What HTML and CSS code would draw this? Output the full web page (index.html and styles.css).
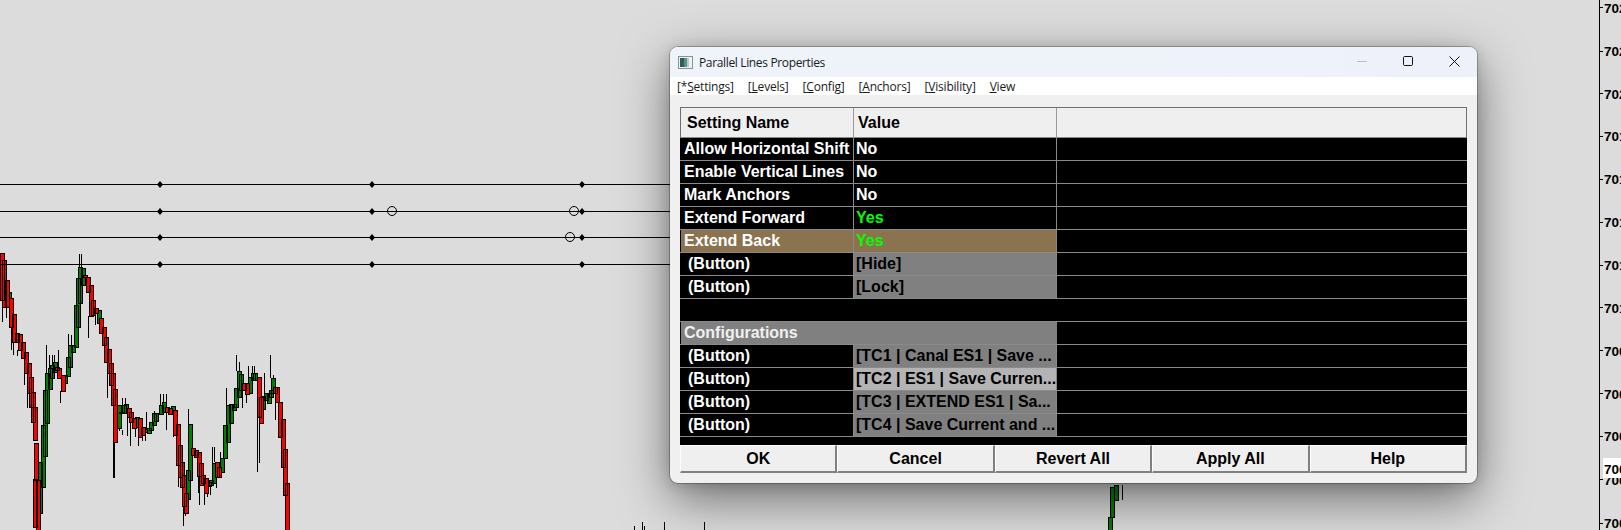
FILE: index.html
```html
<!DOCTYPE html>
<html lang="en">
<head>
<meta charset="utf-8">
<title>Parallel Lines Properties</title>
<link rel="stylesheet" href="styles.css">
</head>
<body>
<svg class="chart" width="1621" height="530" viewBox="0 0 1621 530" shape-rendering="crispEdges">
  <path class="wick" d="M2.5 307v15M6.5 307v11M11.5 327v23M13.5 342v13M17.5 350v6M24.5 373v12M27.5 393v15M46.5 345v28M49.5 355v13M52.5 355v11M54.5 355v7M58.5 350v18M60.5 391v12M68.5 334v11M71.5 335v10M79.5 254v14M81.5 254v14M88.5 316v22M92.5 297v3M95.5 310v15M107.5 373v25M113.5 442v36M114.5 442v36M117.5 398v7M119.5 428v3M122.5 398v7M122.5 430v5M125.5 398v7M127.5 417v19M130.5 422v24M135.5 427v10M138.5 437v9M142.5 435v6M145.5 434v7M146.5 412v20M154.5 411v9M158.5 414v6M160.5 394v16M163.5 394v16M166.5 394v14M166.5 412v18M173.5 435v2M178.5 476v11M183.5 506v20M185.5 512v4M188.5 409v15M191.5 424v44M198.5 476v17M199.5 485v20M204.5 493v12M207.5 486v11M210.5 485v10M212.5 447v16M214.5 447v15M216.5 477v11M220.5 452v6M226.5 388v17M232.5 410v10M236.5 355v16M239.5 362v12M242.5 390v18M246.5 394v9M248.5 366v11M252.5 366v7M254.5 366v7M257.5 417v55M259.5 423v40M264.5 373v20M264.5 400v6M270.5 355v23M273.5 375v12M275.5 402v18M1122.5 485v15M634.5 526v4M642.5 522v8M644.5 526v4M664.5 522v8M704.5 522v8"/>
  <path class="candle-green" d="M7.500 292h4v13h-4zM38.500 462h4v51h-4zM41.500 425h4v62h-4zM43.500 390h4v66h-4zM45.500 373h4v50h-4zM48.500 368h4v21h-4zM50.500 365h4v13h-4zM53.500 362h4v10h-4zM63.500 375h4v8h-4zM66.500 357h4v19h-4zM68.500 345h4v22h-4zM71.500 345h4v7h-4zM74.500 305h4v42h-4zM76.500 278h4v49h-4zM78.500 267h4v36h-4zM81.500 268h4v17h-4zM97.500 310h4v13h-4zM117.500 405h4v23h-4zM122.500 405h4v8h-4zM124.500 404h4v9h-4zM135.500 417h4v10h-4zM143.500 429h4v3h-4zM147.500 428h4v5h-4zM149.500 422h4v8h-4zM152.500 413h4v12h-4zM154.500 413h4v8h-4zM159.500 405h4v9h-4zM162.500 402h4v10h-4zM171.500 406h4v4h-4zM186.500 470h4v29h-4zM188.500 424h4v56h-4zM207.500 482h4v4h-4zM209.500 480h4v5h-4zM212.500 463h4v20h-4zM220.500 458h4v14h-4zM223.500 425h4v33h-4zM226.500 405h4v37h-4zM229.500 404h4v19h-4zM232.500 404h4v6h-4zM234.500 388h4v19h-4zM237.500 371h4v26h-4zM239.500 374h4v16h-4zM248.500 377h4v16h-4zM251.500 373h4v7h-4zM253.500 373h4v7h-4zM261.500 396h4v13h-4zM264.500 393h4v7h-4zM267.500 393h4v10h-4zM269.500 390h4v7h-4zM271.500 378h4v15h-4zM1108.500 517h4v13h-4zM1110.500 487h4v30h-4zM1114.500 485h4v15h-4z"/>
  <path class="candle-red" d="M.5 253h4v47h-4zM2.500 260h4v47h-4zM5.500 280h4v27h-4zM9.500 298h4v29h-4zM12.500 314h4v28h-4zM15.500 333h4v9h-4zM18.500 334h4v16h-4zM21.500 342h4v16h-4zM24.500 352h4v21h-4zM27.500 363h4v30h-4zM29.500 377h4v30h-4zM31.500 392h4v30h-4zM33.500 407h4v33h-4zM34.500 443h4v37h-4zM33.500 479h4v48h-4zM36.500 480h4v50h-4zM55.500 367h4v3h-4zM57.500 368h4v10h-4zM61.500 375h4v16h-4zM83.500 275h4v2h-4zM86.500 277h4v15h-4zM89.500 285h4v31h-4zM91.500 300h4v15h-4zM94.500 308h4v5h-4zM99.500 318h4v15h-4zM102.500 327h4v18h-4zM104.500 337h4v25h-4zM107.500 349h4v24h-4zM109.500 363h4v22h-4zM111.500 373h4v32h-4zM113.500 389h4v53h-4zM119.500 412h4v1h-4zM127.500 408h4v9h-4zM129.500 412h4v10h-4zM132.500 418h4v10h-4zM138.500 418h4v19h-4zM141.500 427h4v8h-4zM165.500 407h4v5h-4zM168.500 408h4v6h-4zM173.500 410h4v25h-4zM176.500 424h4v41h-4zM178.500 445h4v32h-4zM180.500 462h4v25h-4zM182.500 475h4v31h-4zM184.500 493h4v20h-4zM191.500 448h4v7h-4zM194.500 450h4v7h-4zM197.500 452h4v24h-4zM199.500 463h4v22h-4zM201.500 475h4v8h-4zM204.500 478h4v15h-4zM215.500 462h4v15h-4zM217.500 467h4v10h-4zM242.500 383h4v7h-4zM245.500 383h4v11h-4zM257.500 377h4v40h-4zM259.500 397h4v26h-4zM273.500 387h4v6h-4zM275.500 387h4v15h-4zM278.500 402h4v35h-4zM281.500 419h4v48h-4zM283.500 449h4v46h-4zM285.500 483h4v47h-4z"/>
  <path class="hline" d="M0 184.500H670M0 211.500H670M0 237.500H670M0 264.500H670"/>
  <g class="anchor" shape-rendering="auto">
    <path d="M160 181l3 3.500-3 3.500-3-3.500zM372 181l3 3.500-3 3.500-3-3.500zM582 181l3 3.500-3 3.500-3-3.500zM160 208l3 3.500-3 3.500-3-3.500zM372 208l3 3.500-3 3.500-3-3.500zM582 208l3 3.500-3 3.500-3-3.500zM160 234l3 3.500-3 3.500-3-3.500zM372 234l3 3.500-3 3.500-3-3.500zM582 234l3 3.500-3 3.500-3-3.500zM160 261l3 3.500-3 3.500-3-3.500zM372 261l3 3.500-3 3.500-3-3.500zM582 261l3 3.500-3 3.500-3-3.500z"/>
  </g>
  <g class="ring" shape-rendering="auto">
    <circle cx="392" cy="211" r="4.500"/>
    <circle cx="574" cy="211" r="4.500"/>
    <circle cx="570" cy="237" r="4.500"/>
  </g>
  <path class="axis-line" d="M1599.500 0V530M1599 7h4M1599 51h4M1599 93h4M1599 136h4M1599 179h4M1599 222h4M1599 265h4M1599 307h4M1599 350h4M1599 393h4M1599 436h4M1599 479h4M1599 523h4"/>
  <g class="axis-labels">
    <text x="1604" y="13">7025.00</text>
    <text x="1604" y="56">7023.50</text>
    <text x="1604" y="99">7022.00</text>
    <text x="1604" y="141">7019.50</text>
    <text x="1604" y="184">7018.00</text>
    <text x="1604" y="227">7016.50</text>
    <text x="1604" y="270">7015.00</text>
    <text x="1604" y="313">7013.50</text>
    <text x="1604" y="356">7009.00</text>
    <text x="1604" y="399">7007.50</text>
    <text x="1604" y="441">7006.00</text>
    <text x="1604" y="485">7004.50</text>
    <text x="1604" y="528">7003.00</text>
    <rect class="price-flag" x="1603" y="458" width="18" height="20"/>
    <text x="1604" y="474">7005.25</text>
  </g>
</svg>

<section class="window">
  <header class="titlebar">
    <svg class="app-icon" width="15" height="13" viewBox="0 0 15 13">
      <rect x=".5" y=".5" width="14" height="12" fill="#eef0f2" stroke="#8d9196"/>
      <rect x="2" y="2" width="4" height="9" fill="#2c5f5c"/>
      <rect x="6" y="2" width="3" height="9" fill="#5f8f8c"/>
      <rect x="9" y="2" width="2" height="9" fill="#b5cdca"/>
      <rect x="11" y="2" width="2" height="9" fill="#eef2f4"/>
    </svg>
    <span class="window-title">Parallel Lines Properties</span>
    <div class="controls">
      <svg class="control" width="46" height="30" viewBox="0 0 46 30"><path class="min-glyph" d="M18 14.500h10"/></svg>
      <svg class="control" width="46" height="30" viewBox="0 0 46 30"><rect class="glyph" x="18.500" y="9.500" width="9" height="9" rx="1.200"/></svg>
      <svg class="control" width="46" height="30" viewBox="0 0 46 30"><path class="glyph" d="M18.500 9.500l10 10M28.500 9.500l-10 10"/></svg>
    </div>
  </header>
  <nav class="menubar">
    <span class="menu-item">[*<u>S</u>ettings]</span>
    <span class="menu-item">[<u>L</u>evels]</span>
    <span class="menu-item">[<u>C</u>onfig]</span>
    <span class="menu-item">[<u>A</u>nchors]</span>
    <span class="menu-item">[<u>V</u>isibility]</span>
    <span class="menu-item"><u>V</u>iew</span>
  </nav>
  <div class="content">
    <div class="grid">
      <div class="grid-head">
        <div class="head-cell">Setting Name</div>
        <div class="head-cell head-value">Value</div>
        <div class="head-cell"></div>
      </div>
      <div class="row"><div class="cell">Allow Horizontal Shift</div><div class="cell val">No</div><div class="cell"></div></div>
      <div class="row"><div class="cell">Enable Vertical Lines</div><div class="cell val">No</div><div class="cell"></div></div>
      <div class="row"><div class="cell">Mark Anchors</div><div class="cell val">No</div><div class="cell"></div></div>
      <div class="row"><div class="cell">Extend Forward</div><div class="cell val yes">Yes</div><div class="cell"></div></div>
      <div class="row"><div class="cell tan">Extend Back</div><div class="cell val yes tan">Yes</div><div class="cell"></div></div>
      <div class="row"><div class="cell btn-name">(Button)</div><div class="cell val action">[Hide]</div><div class="cell"></div></div>
      <div class="row"><div class="cell btn-name">(Button)</div><div class="cell val action">[Lock]</div><div class="cell"></div></div>
      <div class="row row-blank"></div>
      <div class="row"><div class="cell section-head">Configurations</div><div class="cell"></div></div>
      <div class="row"><div class="cell btn-name">(Button)</div><div class="cell val action">[TC1 | Canal ES1 | Save ...</div><div class="cell"></div></div>
      <div class="row"><div class="cell btn-name">(Button)</div><div class="cell val action action-hover">[TC2 | ES1 | Save Curren...</div><div class="cell"></div></div>
      <div class="row"><div class="cell btn-name">(Button)</div><div class="cell val action">[TC3 | EXTEND ES1 | Sa...</div><div class="cell"></div></div>
      <div class="row"><div class="cell btn-name">(Button)</div><div class="cell val action">[TC4 | Save Current and ...</div><div class="cell"></div></div>
      <div class="grid-tail"></div>
    </div>
    <div class="buttons">
      <button class="dlg-btn">OK</button>
      <button class="dlg-btn">Cancel</button>
      <button class="dlg-btn">Revert All</button>
      <button class="dlg-btn">Apply All</button>
      <button class="dlg-btn">Help</button>
    </div>
  </div>
</section>
</body>
</html>
```

FILE: styles.css
```css
html, body {
  margin: 0;
  padding: 0;
  width: 1621px;
  height: 530px;
  overflow: hidden;
  background: #dcdcdc;
  font-family: "Liberation Sans", Arial, sans-serif;
}

.chart {
  position: absolute;
  left: 0;
  top: 0;
}
.wick { fill: none; stroke: #000; stroke-width: 1; }
.candle-red { fill: #ff0000; stroke: #000; stroke-width: 1; }
.candle-green { fill: #008000; stroke: #000; stroke-width: 1; }
.hline { fill: none; stroke: #000; stroke-width: 1; }
.anchor { fill: #000; }
.ring { fill: none; stroke: #000; stroke-width: 1; }
.axis-line { fill: none; stroke: #000; stroke-width: 1; }
.axis-labels { font: bold 13.500px "Liberation Sans", Arial, sans-serif; fill: #000; }
.price-flag { fill: #fff; }

.window {
  position: absolute;
  left: 670px;
  top: 47px;
  width: 807px;
  height: 436px;
  box-sizing: border-box;
  display: flex;
  flex-direction: column;
  background: #f0f0f0;
  border-radius: 8px;
  overflow: hidden;
  box-shadow: 0 0 0 1px rgba(0,0,0,.25), 0 16px 50px rgba(0,0,0,.5), 0 2px 14px rgba(0,0,0,.16);
}

.titlebar {
  height: 30px;
  flex: none;
  display: flex;
  align-items: center;
  padding-left: 8px;
  background: linear-gradient(90deg, #eef4f9, #eef1fa);
}
.app-icon { flex: none; margin-right: 6px; }
.window-title {
  font: 12px "Open Sans", "Noto Sans", sans-serif;
  color: #1a1a1a;
  letter-spacing: -.35px;
  flex: 1;
}
.controls { display: flex; flex: none; }
.control { display: block; }
.glyph { fill: none; stroke: #111; stroke-width: 1; }
.min-glyph { fill: none; stroke: #b8bcc2; stroke-width: 1; }

.menubar {
  height: 18px;
  flex: none;
  display: flex;
  align-items: center;
  gap: 14px;
  padding-left: 7px;
  background: #fff;
  font: 12px "Open Sans", "Noto Sans", sans-serif;
  letter-spacing: -.2px;
  color: #1a1a1a;
}
.menu-item { white-space: nowrap; }

.content {
  padding: 12px 10px 0;
}
.grid {
  background: #000;
  font-size: 16px;
  font-weight: bold;
  color: #fff;
}
.grid-head,
.row {
  display: grid;
  grid-template-columns: 173px 203px 1fr;
}
.grid-head {
  height: 31px;
  box-sizing: border-box;
  background: #efefef;
  color: #000;
  border: 1px solid #6e6e6e;
  border-bottom-color: #8a8a8a;
}
.head-cell {
  display: flex;
  align-items: center;
  padding-left: 6px;
  border-right: 1px solid #9a9a9a;
}
.head-cell:last-child { border-right: 0; }
.head-value { padding-left: 4px; }

.row {
  height: 23px;
  box-sizing: border-box;
  padding-left: 1px;
  border-bottom: 1px solid #8a8a8a;
}
.cell {
  display: flex;
  align-items: center;
  padding-left: 3px;
  border-right: 1px solid #8a8a8a;
  white-space: nowrap;
  overflow: hidden;
}
.cell:last-child { border-right: 0; }
.val { padding-left: 2px; }
.btn-name { padding-left: 7px; }
.yes { color: #00ff00; }
.tan { background: #8b7350; }
.action { background: #808080; color: #000; }
.action-hover { background: #b4b4b4; }
.section-head {
  grid-column: 1 / span 2;
  background: #808080;
  color: #f0f0f0;
  border-right: 0;
}
.row-blank { display: block; }
.grid-tail { height: 8px; }

.buttons {
  display: grid;
  grid-template-columns: repeat(5, 1fr);
  height: 28px;
}
.dlg-btn {
  padding: 0;
  margin: 0;
  background: #efefef;
  border: 0;
  border-top: 1px solid #fff;
  border-left: 1px solid #fff;
  border-right: 2px solid #808080;
  border-bottom: 2px solid #808080;
  font: bold 16px "Liberation Sans", Arial, sans-serif;
  color: #000;
}
```
